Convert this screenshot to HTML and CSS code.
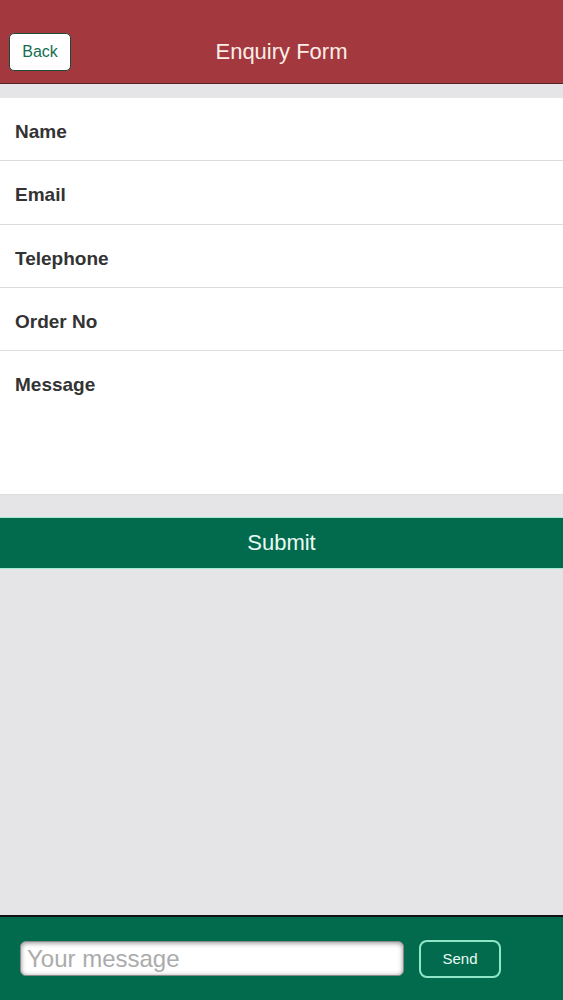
FILE: index.html
```html
<!DOCTYPE html>
<html lang="en">

<head>
    <meta charset="UTF-8">
    <meta name="viewport" content="width=device-width, initial-scale=1.0">
    <title>Enquiry Form</title>
    <link rel="stylesheet" href="styles.css">
</head>

<body>
    <div class="pagina">
        <header class="topo">
            <button class="btn_voltar">Back</button>
            <h1>Enquiry Form</h1>
        </header>

        <form class="formulario">
            <div class="campo">Name</div>
            <div class="campo campo_alto">Email</div>
            <div class="campo">Telephone</div>
            <div class="campo">Order No</div>
            <div class="campo campo_mensagem">Message</div>
        </form>

        <button class="btn_enviar">Submit</button>

        <div class="espaco"></div>

        <footer class="rodape">
            <input class="caixa" type="text" placeholder="Your message">
            <button class="btn_send">Send</button>
        </footer>
    </div>
</body>

</html>
```

FILE: styles.css
```css
* {
    margin: 0;
    padding: 0;
    box-sizing: border-box;
    font-family: "Liberation Sans", Arial, sans-serif;
}

body {
    background-color: #e5e5e7;
}

.pagina {
    height: 1000px;
    display: flex;
    flex-direction: column;
}

.topo {
    height: 84px;
    flex-shrink: 0;
    background-color: #a3393e;
    border-bottom: 1px solid #5a2326;
    display: flex;
    align-items: center;
    justify-content: center;
    position: relative;
}

.topo h1 {
    font-size: 22px;
    font-weight: normal;
    color: #fbeee8;
    margin-top: 20px;
}

.btn_voltar {
    position: absolute;
    left: 9px;
    top: 33px;
    width: 62px;
    height: 38px;
    background: #fff;
    border: 1px solid #1f4a3a;
    border-radius: 5px;
    color: #146f52;
    font-size: 16px;
}

.formulario {
    margin-top: 14px;
    background: #fff;
}

.campo {
    height: 63px;
    padding: 23px 15px 0;
    border-bottom: 1px solid #dcdcdc;
    font-size: 19px;
    font-weight: bold;
    color: #333;
}

.campo_alto {
    height: 64px;
}

.campo_mensagem {
    height: 144px;
    border-bottom: 1px solid #dedede;
}

.btn_enviar {
    margin-top: 22px;
    height: 52px;
    flex-shrink: 0;
    background-color: #026b4d;
    border: none;
    border-top: 1px solid #a6ead2;
    border-bottom: 1px solid #a6ead2;
    color: #eafaf4;
    font-size: 22px;
}

.espaco {
    flex: 1;
}

.rodape {
    height: 85px;
    flex-shrink: 0;
    background-color: #036b4d;
    border-top: 2px solid #111;
    display: flex;
    align-items: center;
    padding: 0 0 0 20px;
    gap: 15px;
}

.caixa {
    width: 384px;
    height: 35px;
    border: 1px solid #8a8a8a;
    border-radius: 6px;
    box-shadow: inset 0 1px 5px rgba(0, 0, 0, 0.45);
    padding: 0 6px;
    font-size: 24px;
    color: #333;
}

.caixa::placeholder {
    color: #ababab;
}

.btn_send {
    width: 82px;
    height: 38px;
    background: transparent;
    border: 2px solid #8fe6c6;
    border-radius: 8px;
    color: #e8fbf4;
    font-size: 15px;
}
```
